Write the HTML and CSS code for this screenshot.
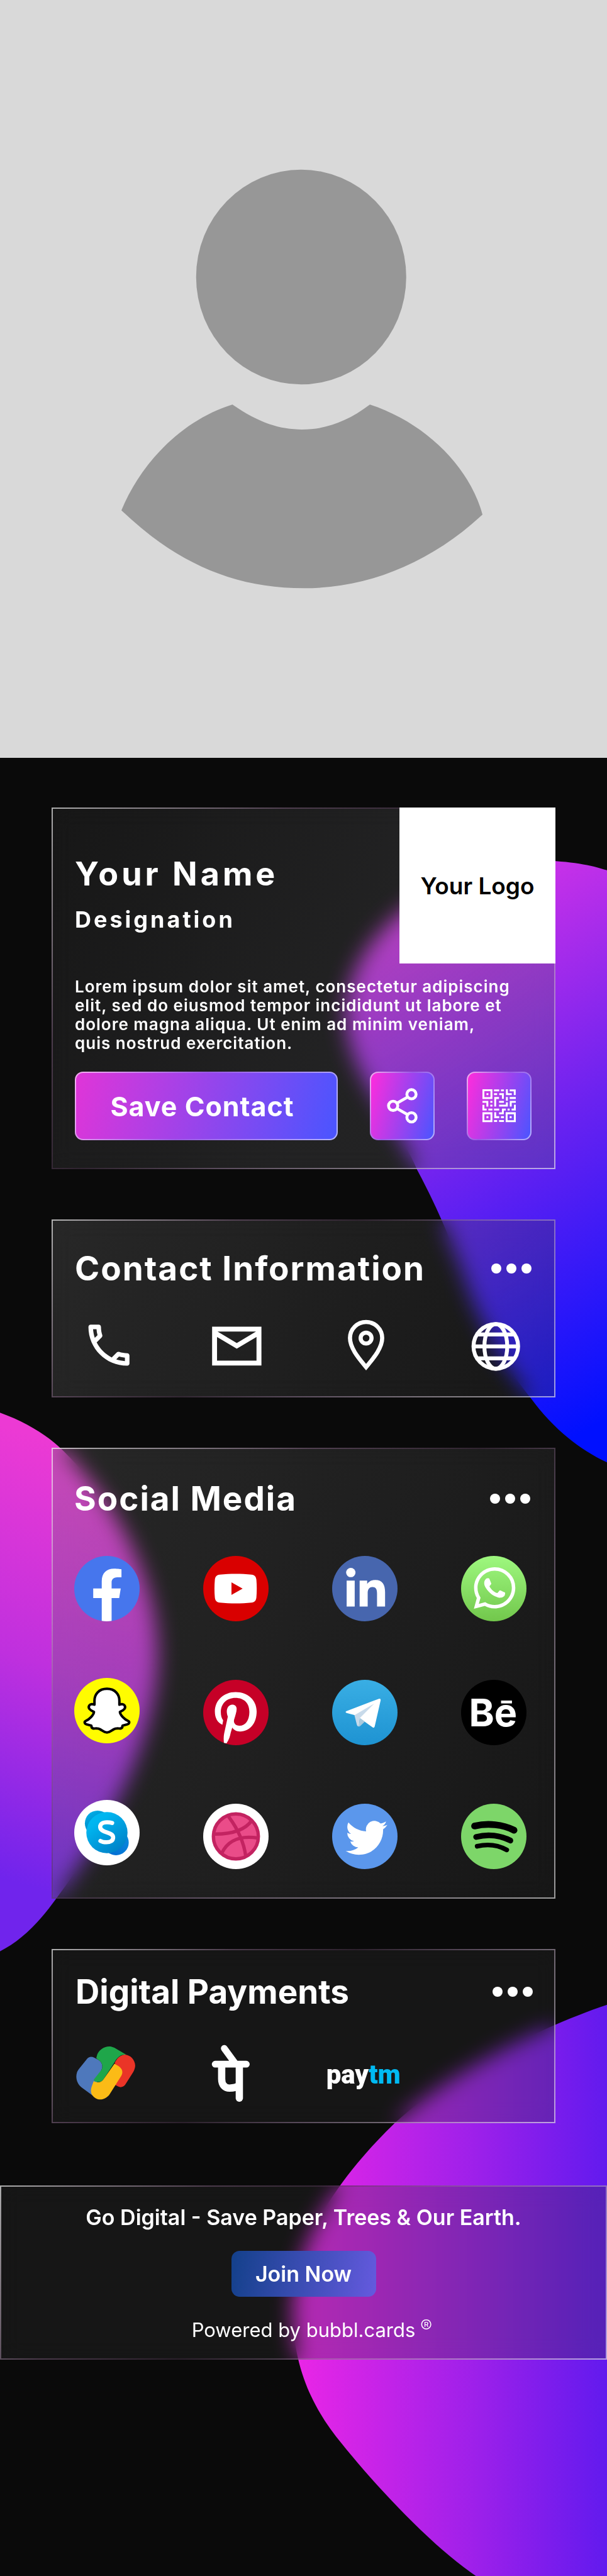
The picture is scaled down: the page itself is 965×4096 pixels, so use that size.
FILE: index.html
```html
<!DOCTYPE html>
<html lang="en">
<head>
<meta charset="utf-8">
<meta name="viewport" content="width=device-width, initial-scale=1">
<title>Your Name - Digital Card</title>
<link rel="stylesheet" href="styles.css">
</head>
<body>
<div class="page">
  <svg class="backdrop" viewBox="0 0 1170 4965" preserveAspectRatio="none" aria-hidden="true">
    <defs>
      <linearGradient id="blobRight" gradientUnits="userSpaceOnUse" x1="780" y1="1700" x2="1330" y2="2640">
        <stop offset="0" stop-color="#e035e6"/><stop offset=".5" stop-color="#6a22f0"/><stop offset="1" stop-color="#0010ff"/>
      </linearGradient>
      <linearGradient id="blobLeft" gradientUnits="userSpaceOnUse" x1="180" y1="2800" x2="-60" y2="3600">
        <stop offset="0" stop-color="#ec3ad4"/><stop offset=".5" stop-color="#bf30de"/><stop offset="1" stop-color="#7024ec"/>
      </linearGradient>
      <linearGradient id="blobBottom" gradientUnits="userSpaceOnUse" x1="570" y1="0" x2="1170" y2="0">
        <stop offset="0" stop-color="#ea26e6"/><stop offset=".6" stop-color="#9a20ea"/><stop offset="1" stop-color="#621aee"/>
      </linearGradient>
    </defs>
    <path fill="url(#blobRight)" d="M1170 1677C1140 1667 1100 1659 1040 1658C870 1660 668 1790 666 1955C668 2070 765 2160 804 2254C850 2340 872 2400 893 2455C925 2560 980 2640 1023 2694C1060 2745 1110 2790 1170 2818Z"/>
    <path fill="url(#blobLeft)" d="M0 2722C50 2740 90 2765 117 2791C200 2870 304 3020 304 3190C304 3360 190 3550 108 3659C75 3705 40 3740 0 3760Z"/>
    <path fill="url(#blobBottom)" d="M1170 3863C1050 3903 870 3990 760 4092C690 4160 565 4300 564 4450C564 4570 610 4650 659 4709C720 4785 830 4905 919 4965H1170Z"/>
  </svg>

  <svg class="portrait" viewBox="0 0 1170 1461" role="img" aria-label="Profile picture">
    <rect width="1170" height="1461" fill="#d9d9d9"/>
    <g fill="#979797">
      <ellipse cx="580.5" cy="534" rx="202.500" ry="207"/>
      <path d="M448 780C500 816 540 828 582 828C626 828 668 814 713 780C820 815 905 900 930 992C830 1085 710 1134 586 1134C450 1134 340 1085 234 984C270 895 350 810 448 780Z"/>
    </g>
  </svg>

  <main class="cards">
    <section class="card card-profile">
      <div class="profile-head">
        <div>
          <h1 class="name">Your Name</h1>
          <p class="designation">Designation</p>
        </div>
        <div class="logo">Your Logo</div>
      </div>
      <p class="bio">Lorem ipsum dolor sit amet, consectetur adipiscing elit, sed do eiusmod tempor incididunt ut labore et dolore magna aliqua. Ut enim ad minim veniam, quis nostrud exercitation.</p>
      <div class="actions">
        <button class="btn btn-save" type="button">Save Contact</button>
        <button class="btn btn-icon" type="button" aria-label="Share">
          <svg viewBox="0 0 60 68" class="share-icon" fill="none" stroke="#fff" stroke-width="5.500"><circle cx="12" cy="34" r="8.800"/><circle cx="47" cy="12" r="8.800"/><circle cx="47" cy="56" r="8.800"/><path d="M19 29L40 17M19 39L40 51"/></svg>
        </button>
        <button class="btn btn-icon" type="button" aria-label="QR code">
          <svg viewBox="42 33 191 189" class="qr-icon" fill="none" stroke="#fff" stroke-width="11"><path d="M47.500 38.500H93.500V83.500H47.500ZM180.500 170.500H227.500V216H180.500ZM47.500 170.500H93.500V216H47.500ZM65 61H76M65 193H76M198 193H209M108 39H138M148 39H165M182 33V61H210M198 39H227V66M108 61H126M138 61H159V88M198 83H233M182 77V99M115 132V83H137M42 105H70V132M87 105H99M87 127H99M47.500 122V149H66M76 149H99M108 149H138M137 105H165M137 127H182V108M204 132V105H233M209 149H228V121M137 171H159V149H176M186 149H198M115 165V193H138M148 193H165M108 215H126M137 215H165"/></svg>
        </button>
      </div>
    </section>

    <section class="card card-contact">
      <header class="card-head">
        <h2 class="card-title tracked">Contact Information</h2>
        <button class="more" type="button" aria-label="More"><span></span><span></span><span></span></button>
      </header>
      <div class="icon-row">
        <a class="tile" href="#" aria-label="Phone"><svg viewBox="0 0 126 126"><path fill="#fff" transform="translate(13 9) scale(4.390)" d="M6.540 5c.06.89.21 1.760.45 2.590l-1.200 1.200c-.41-1.200-.67-2.470-.76-3.790h1.510m9.860 12.020c.85.24 1.720.39 2.600.45v1.490c-1.320-.09-2.590-.35-3.800-.75l1.200-1.190M7.500 3H4c-.55 0-1 .45-1 1 0 9.390 7.610 17 17 17 .55 0 1-.45 1-1v-3.490c0-.55-.45-1-1-1-1.240 0-2.450-.2-3.570-.57-.1-.04-.21-.05-.31-.05-.26 0-.51.1-.71.29l-2.200 2.200c-2.830-1.450-5.150-3.760-6.590-6.590l2.200-2.200c.28-.28.36-.67.25-1.020C8.700 6.450 8.500 5.250 8.500 4c0-.55-.45-1-1-1z"/></svg></a>
        <a class="tile" href="#" aria-label="Email"><svg viewBox="0 0 126 126" fill="none" stroke="#fff" stroke-width="9.500"><path d="M20.750 30.750H106.250V96.250H20.750ZM20 37L63.500 63L107 37"/></svg></a>
        <a class="tile" href="#" aria-label="Location"><svg viewBox="0 0 126 126" fill="none" stroke="#fff" stroke-width="8"><path d="M63 104C50 88 32 68 32 48A31 31 0 0 1 94 48C94 68 76 88 63 104Z"/><circle cx="63" cy="48" r="10.500"/></svg></a>
        <a class="tile" href="#" aria-label="Website"><svg viewBox="0 0 126 126" fill="none" stroke="#fff" stroke-width="7.500"><circle cx="64.500" cy="64" r="43"/><ellipse cx="64.500" cy="64" rx="22" ry="43"/><path d="M26 41H103M20 64H109M26 87H103"/></svg></a>
      </div>
    </section>

    <section class="card card-social">
      <header class="card-head">
        <h2 class="card-title tracked">Social Media</h2>
        <button class="more" type="button" aria-label="More"><span></span><span></span><span></span></button>
      </header>
      <div class="social-grid">
        <div class="social-col social-col-tight">
          <a class="tile" href="#" aria-label="Facebook"><svg viewBox="0 0 126 126"><circle cx="63" cy="63" r="63" fill="#4676ed"/><path fill="#fff" d="M53 125.200V81.300H36.600V62.700H53V49C53 33 62 24.500 77 24.500C84 24.500 91 25.700 91 25.700V41.300H83C75 41.300 72 46 72 51V62.700H89.600L86.600 81.300H72V125.200C66 126.200 59 126.200 53 125.200Z"/></svg></a>
          <a class="tile" href="#" aria-label="Snapchat"><svg viewBox="0 0 126 126"><circle cx="63" cy="63" r="63" fill="#fffc00"/><path fill="#fff" stroke="#000" stroke-width="4.800" stroke-linejoin="round" d="M63 21C47 21 39 32 39 44V51.500C36 50 31 50 29 53C26 58 30 62 38 65.500C38 71 29 80 22 83C19 84.500 19.500 88 24 89.500L33 92C33 95 34 97 37 97.500C42 97.500 46 96.500 50 99C55 102 58 105 63 105C68 105 71 102 76 99C80 96.500 84 97.500 89 97.500C92 97 93 95 93 92L102 89.500C106.500 88 107 84.500 104 83C97 80 88 71 88 65.500C96 62 100 58 97 53C95 50 90 50 87 51.500V44C87 32 79 21 63 21Z"/></svg></a>
          <a class="tile" href="#" aria-label="Skype"><svg viewBox="0 0 126 126"><defs><linearGradient id="skA" x1="0" y1="0" x2=".7" y2="1"><stop offset="0" stop-color="#00bdf2"/><stop offset=".3" stop-color="#00b4ef"/><stop offset="1" stop-color="#0082c8"/></linearGradient><linearGradient id="skB" x1="0" y1="0" x2=".6" y2="1"><stop offset="0" stop-color="#00b7f0"/><stop offset="1" stop-color="#006fb0"/></linearGradient><linearGradient id="skC" x1="1" y1="0" x2="0" y2="1"><stop offset="0" stop-color="#0c8fe0"/><stop offset="1" stop-color="#0068d0"/></linearGradient></defs><circle cx="63" cy="63" r="63" fill="#fff"/><circle cx="45" cy="45" r="24.500" fill="url(#skB)"/><circle cx="80.500" cy="82" r="24.500" fill="url(#skC)"/><circle cx="63" cy="63" r="39.700" fill="url(#skA)"/><path fill="none" stroke="#fff" stroke-width="8" stroke-linecap="round" d="M73 44.500C70 43.500 67 43 63 43C54 43 50 47 50 52C50 64 75 61 75 72C75 79 69 81.500 62 81.500C57 81.500 53 80.500 50.500 79"/></svg></a>
        </div>
        <div class="social-col">
          <a class="tile" href="#" aria-label="YouTube"><svg viewBox="0 0 126 126"><circle cx="63" cy="63" r="63" fill="#d90000"/><path fill="#fff" d="M32 36C52 34 74 34 93 36C99 36.500 102 40 102.500 46C103.500 57 103.500 69 102.500 80C102 86 99 89.500 93 90C74 92 52 92 32 90C26 89.500 23 86 22.500 80C21.500 69 21.500 57 22.500 46C23 40 26 36.500 32 36Z"/><path fill="#d90000" d="M54.500 51L76 63L54.500 75Z"/></svg></a>
          <a class="tile" href="#" aria-label="Pinterest"><svg viewBox="0 0 126 126"><circle cx="63" cy="63" r="63" fill="#c60027"/><path fill="#fff" d="M62.500 23.500C39 23.500 22.500 40 22.500 61C22.500 74 28 83 37 86.500L38.500 78C35.500 74 34 69 34 62C34 46 45.500 34.800 62 34.800C79 34.800 89 45 89 62C89 78 81 88.500 70 88.500C62.500 88.500 58 83.500 59.500 77C61.500 70 64.500 62 64.500 56C64.500 51 61 47.800 56 47.800C49.500 47.800 45.500 54 45.500 61C45.500 66 47.500 71 47.500 71L40.500 103C39 110 39.500 117 40 121.500L45 122.500C50 115 52 108 53 102L56 92C59 96.500 64 99.500 71 99.500C90 99.500 103 84 103 61C103 39 86 23.500 62.500 23.500Z"/></svg></a>
          <a class="tile" href="#" aria-label="Dribbble"><svg viewBox="0 0 126 126"><circle cx="63" cy="63" r="63" fill="#fff"/><g stroke="#c32361" stroke-width="6.500"><circle cx="63" cy="63" r="43.300" fill="#ea4c89"/><path fill="none" d="M49 25C64 45 78 72 82 101M20 58.500C52 59 80 52 94 32M36 95C48 70 72 61 105 66"/></g></svg></a>
        </div>
        <div class="social-col">
          <a class="tile" href="#" aria-label="LinkedIn"><svg viewBox="0 0 126 126"><circle cx="63" cy="63" r="63" fill="#4766ae"/><g fill="#fff"><circle cx="36" cy="32" r="9"/><path d="M28 47.500H43.500V97.500H28ZM53 47.500H67.500V54C71 49 76 46.300 83 46.300C97 46.300 102 55 102 70V97.500H86.500V73C86.500 65 85 60 78 60C71 60 68.500 65 68.500 72V97.500H53Z"/></g></svg></a>
          <a class="tile" href="#" aria-label="Telegram"><svg viewBox="0 0 126 126"><defs><linearGradient id="tg" x1="0" y1="0" x2="0" y2="1"><stop offset="0" stop-color="#39aee4"/><stop offset="1" stop-color="#1e93d2"/></linearGradient></defs><circle cx="63" cy="63" r="63" fill="url(#tg)"/><path fill="#fff" d="M27 60.500L90 36.500Q94 35.500 93.500 39.500L82 90Q80.500 94 77 91L52 73L44 68L28 64Q24.500 62.500 27 60.500Z"/><path fill="#c8daea" d="M43 68L81 46L53.500 73.500L51.500 90Q48.500 90 47.500 86Z"/><path fill="#a9c9dd" d="M51.500 90L53.500 73.500L63 80.500L54 89Q52.500 90.200 51.500 90Z"/></svg></a>
          <a class="tile" href="#" aria-label="Twitter"><svg viewBox="0 0 126 126"><circle cx="63" cy="63" r="63" fill="#5b97ec"/><path fill="#fff" transform="translate(26 25.500) scale(3.350)" d="M23.953 4.570a10 10 0 01-2.825.775 4.958 4.958 0 002.163-2.723c-.951.555-2.005.959-3.127 1.184a4.920 4.920 0 00-8.384 4.482C7.690 8.095 4.067 6.130 1.640 3.162a4.822 4.822 0 00-.666 2.475c0 1.710.87 3.213 2.188 4.096a4.904 4.904 0 01-2.228-.616v.06a4.923 4.923 0 003.946 4.827 4.996 4.996 0 01-2.212.085 4.936 4.936 0 004.604 3.417 9.867 9.867 0 01-6.102 2.105c-.39 0-.779-.023-1.170-.067a13.995 13.995 0 007.557 2.209c9.053 0 13.998-7.496 13.998-13.985 0-.21 0-.42-.015-.63A9.935 9.935 0 0024 4.590z"/></svg></a>
        </div>
        <div class="social-col">
          <a class="tile" href="#" aria-label="WhatsApp"><svg viewBox="0 0 126 126"><defs><linearGradient id="wa" x1="0" y1="0" x2="0" y2="1"><stop offset="0" stop-color="#9ef87f"/><stop offset="1" stop-color="#72c74c"/></linearGradient></defs><circle cx="63" cy="63" r="63" fill="url(#wa)"/><path fill="#fff" transform="translate(24.500 21.700) scale(3.340)" d="M17.472 14.382c-.297-.149-1.758-.867-2.030-.967-.273-.099-.471-.148-.67.15-.197.297-.767.966-.94 1.164-.173.199-.347.223-.644.075-.297-.15-1.255-.463-2.390-1.475-.883-.788-1.480-1.761-1.653-2.059-.173-.297-.018-.458.13-.606.134-.133.298-.347.446-.52.149-.174.198-.298.298-.497.099-.198.05-.371-.025-.52-.075-.149-.669-1.612-.916-2.207-.242-.579-.487-.5-.669-.51-.173-.008-.371-.01-.57-.01-.198 0-.52.074-.792.372-.272.297-1.040 1.016-1.040 2.479 0 1.462 1.065 2.875 1.213 3.074.149.198 2.096 3.200 5.077 4.487.709.306 1.262.489 1.694.625.712.227 1.360.195 1.871.118.571-.085 1.758-.719 2.006-1.413.248-.694.248-1.289.173-1.413-.074-.124-.272-.198-.57-.347m-5.421 7.403h-.004a9.870 9.870 0 01-5.031-1.378l-.361-.214-3.741.982.998-3.648-.235-.374a9.860 9.860 0 01-1.510-5.260c.001-5.450 4.436-9.884 9.888-9.884 2.640 0 5.122 1.030 6.988 2.898a9.825 9.825 0 012.893 6.994c-.003 5.450-4.437 9.884-9.885 9.884m8.413-18.297A11.815 11.815 0 0012.050 0C5.495 0 .16 5.335.157 11.892c0 2.096.547 4.142 1.588 5.945L.057 24l6.305-1.654a11.882 11.882 0 005.683 1.448h.005c6.554 0 11.890-5.335 11.893-11.893a11.821 11.821 0 00-3.480-8.413z"/></svg></a>
          <a class="tile" href="#" aria-label="Behance"><svg viewBox="0 0 126 126"><circle cx="63" cy="63" r="63" fill="#000"/><text class="behance" x="15" y="90">Be</text><path fill="#fff" d="M77 40H98V45.500H77Z"/></svg></a>
          <a class="tile" href="#" aria-label="Spotify"><svg viewBox="0 0 126 126"><circle cx="63" cy="63" r="63" fill="#7dd669"/><g fill="none" stroke="#000" stroke-linecap="round"><path stroke-width="13" d="M26 43C52 37 80 40 102 51"/><path stroke-width="11" d="M29 64C52 58 76 61 95 71"/><path stroke-width="9" d="M31 82C52 77 70 79 88 89"/></g></svg></a>
        </div>
      </div>
    </section>

    <section class="card card-payments">
      <header class="card-head">
        <h2 class="card-title">Digital Payments</h2>
        <button class="more" type="button" aria-label="More"><span></span><span></span><span></span></button>
      </header>
      <div class="icon-row">
        <a class="tile" href="#" aria-label="Google Pay"><svg viewBox="0 0 126 126"><g transform="translate(0 8.500) scale(1 .91)"><path fill="#ea3427" d="M76 39C80 30 87 23 95 22.500C106 23 115 34 115 46C115 51 113 56 111 60L96 86C93 91 87 93 82 90L73 85Z"/><path fill="#4e78bc" d="M22 32C25 27 31 26 36 29L43 33C51 38 54 47 50 55L33 109L14 94C4 87 -1 73 3 60C4 57 5 56 6 54Z"/><path fill="#1fa64a" d="M40 30L42 22C48 8 62 1 75 8L98 23C89 21 81 27 75 39L54 75C50 81 45 82 37 79L35 76L50 55C54 47 51 38 43 33Z"/><path fill="#fbbb16" d="M75 42L83 47C91 53 92 61 88 68L66 106C60 116 48 121 39 115C29 109 28 99 32 88L35 79C43 83 50 82 54 75Z"/></g></svg></a>
        <a class="tile" href="#" aria-label="PhonePe"><svg viewBox="0 0 126 126" fill="none" stroke="#fff" stroke-width="14"><g stroke-linecap="round"><path stroke-width="13" d="M37 17L58 46M19.500 47.500H79.500"/><path d="M66 50V113"/></g><path d="M32 50V76C32 88 39 93.500 47 93.500C55 93.500 61 92 67 88"/></svg></a>
        <a class="tile" href="#" aria-label="Paytm"><svg viewBox="0 0 126 126"><text class="paytm" x="-15" y="85">pay<tspan class="paytm-blue">tm</tspan></text></svg></a>
        <span class="tile"></span>
      </div>
    </section>
  </main>

  <footer class="card footer">
    <p class="tagline">Go Digital - Save Paper, Trees &amp; Our Earth.</p>
    <a class="join" href="#">Join Now</a>
    <p class="powered">Powered by bubbl.cards<sup class="reg">®</sup></p>
  </footer>
</div>
</body>
</html>
```
FILE: styles.css
```css
* { box-sizing: border-box; }

body {
  margin: 0;
  background: #0a0a0a;
  color: #fff;
  font-family: Inter, "Open Sans", "Liberation Sans", sans-serif;
}

h1, h2, p { margin: 0; }
button { font: inherit; color: inherit; cursor: pointer; }
svg { display: block; }

.page {
  position: relative;
  overflow: hidden;
  padding-bottom: 345px;
}

.backdrop {
  position: absolute;
  inset: 0;
  width: 100%;
  height: 100%;
}

.portrait { position: relative; width: 100%; height: auto; }

.cards {
  display: flex;
  flex-direction: column;
  gap: 80px;
  padding: 79px 82px 99px;
}

/* Frosted glass panel with a shaded hairline frame */
.card {
  position: relative;
  background: linear-gradient(115deg, rgba(112, 112, 112, .29), rgba(54, 54, 54, .29));
  backdrop-filter: blur(17px);
}

.card::before {
  content: "";
  position: absolute;
  inset: 0;
  border: 2px solid transparent;
  border-image: linear-gradient(135deg, rgba(255, 255, 255, .65), rgba(150, 110, 150, .42) 27%, rgba(80, 50, 80, .4) 45%, rgba(160, 130, 165, .48) 62%, rgba(255, 255, 255, .58)) 2;
  pointer-events: none;
}

.card-profile {
  padding: 0 38px 46px 37px;
  background: linear-gradient(115deg, rgba(54, 54, 54, .29), rgba(95, 95, 98, .29) 60%);
}

.profile-head {
  display: flex;
  justify-content: space-between;
  margin-right: -38px;
}

.name {
  margin-top: 76px;
  font-size: 52px;
  line-height: 60px;
  font-weight: 700;
  letter-spacing: 5px;
}

.designation {
  margin-top: 20px;
  font-size: 36px;
  line-height: 44px;
  font-weight: 700;
  letter-spacing: 4px;
}

.logo {
  position: relative;
  display: grid;
  place-items: center;
  width: 248px;
  height: 248px;
  background: #fff;
  color: #000;
  font-size: 37px;
  font-weight: 600;
}

.bio {
  max-width: 698px;
  margin: 22px 0 30px;
  font-size: 26px;
  line-height: 30px;
  font-weight: 600;
  letter-spacing: 1px;
}

.actions { display: flex; gap: 51px; }

.btn {
  height: 109px;
  padding: 0;
  border: 2px solid transparent;
  border-radius: 13px;
  background:
    linear-gradient(105deg, #e035d8, #4a55ff) padding-box,
    linear-gradient(115deg, #f3b0f0, #9a5ae6 45%, #b4b4ff) border-box;
}

.btn-save {
  flex: 1;
  padding-right: 13px;
  font-size: 43px;
  font-weight: 700;
  letter-spacing: 1px;
}

.btn-icon {
  display: grid;
  place-items: center;
  width: 103px;
  background:
    linear-gradient(105deg, #ff2cdc, #4a55ff) padding-box,
    linear-gradient(115deg, #f3b0f0, #9a5ae6 45%, #b4b4ff) border-box;
}

.share-icon { width: 50px; }
.qr-icon { width: 53px; }

.card-head {
  display: flex;
  justify-content: space-between;
  align-items: center;
  height: 60px;
}

.card-title { font-size: 53px; font-weight: 700; }
.tracked { letter-spacing: 2px; }

.more {
  display: flex;
  gap: 8px;
  padding: 0;
  border: 0;
  background: none;
}

.more span {
  width: 16px;
  height: 16px;
  border-radius: 50%;
  background: #fff;
}

.tile { display: block; width: 104px; height: 104px; }
.tile svg { width: 100%; height: 100%; overflow: visible; }

.icon-row, .social-grid {
  display: flex;
  justify-content: space-between;
  padding-right: 6px;
}

.card-contact { padding: 48px 38px 30px 37px; }
.card-contact .icon-row { margin-top: 41px; }

.card-social { padding: 51px 40px 47px 36px; }
.social-grid { margin-top: 61px; }
.social-col { display: flex; flex-direction: column; gap: 93px; }
.social-col-tight { gap: 90px; }

.card-payments {
  padding: 38px 36px 29px 38px;
  background: rgba(50, 50, 50, .29);
}
.card-payments .icon-row { margin-top: 46px; }

.behance { font: 700 74px Inter, sans-serif; fill: #fff; }
.paytm { font: 900 51px Roboto, "DejaVu Sans Condensed", sans-serif; fill: #fff; }
.paytm-blue { fill: #00baf2; }

.footer {
  display: flex;
  flex-direction: column;
  align-items: center;
  gap: 33px;
  padding: 31px 0 27px;
  background: rgba(50, 50, 50, .29);
}

.tagline { font-size: 34px; line-height: 40px; font-weight: 600; }

.join {
  display: grid;
  place-items: center;
  width: 230px;
  height: 73px;
  border-radius: 13px;
  background: linear-gradient(100deg, #13408a, #655adf);
  color: #fff;
  font-size: 34px;
  font-weight: 600;
  text-decoration: none;
}

.powered { position: relative; font-size: 31px; line-height: 40px; }

.reg {
  position: absolute;
  top: 0;
  left: calc(100% + 8px);
  font-size: 28px;
  font-weight: 300;
  line-height: 28px;
}
```
